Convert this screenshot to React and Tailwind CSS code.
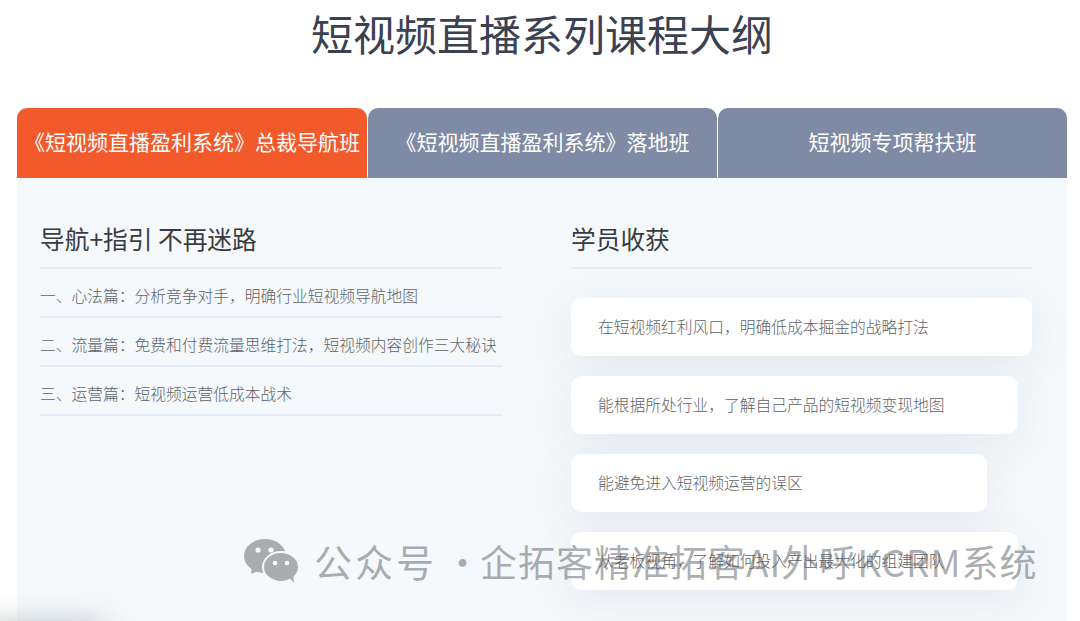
const tabs = [
  { label: "《短视频直播盈利系统》总裁导航班", active: true, width: "w-[350px]" },
  { label: "《短视频直播盈利系统》落地班", width: "w-[349px]" },
  { label: "短视频专项帮扶班", width: "w-[349px]" },
];

const outline = [
  "一、心法篇：分析竞争对手，明确行业短视频导航地图",
  "二、流量篇：免费和付费流量思维打法，短视频内容创作三大秘诀",
  "三、运营篇：短视频运营低成本战术",
];

const gains = [
  { text: "在短视频红利风口，明确低成本掘金的战略打法", width: "w-[461px]" },
  { text: "能根据所处行业，了解自己产品的短视频变现地图", width: "w-[447px]" },
  { text: "能避免进入短视频运营的误区", width: "w-[416px]" },
  { text: "从老板视角，了解如何投入产出最大化的组建团队", width: "w-[447px]" },
];

const WechatIcon = () => (
  <svg width="54" height="44" viewBox="0 0 54 44" fill="#a9adb0">
    <ellipse cx="21" cy="17" rx="21" ry="17" />
    <path d="M8 27 L7 35 L17 31 Z" />
    <ellipse cx="37" cy="28" rx="18" ry="15" stroke="#f5f9fc" strokeWidth="2" />
    <path d="M45 38 L50 44 L49 34 Z" />
    <circle cx="14" cy="11" r="2.6" fill="#f5f9fc" />
    <circle cx="27" cy="11" r="2.6" fill="#f5f9fc" />
    <circle cx="31" cy="24" r="2.3" fill="#f5f9fc" />
    <circle cx="43" cy="24" r="2.3" fill="#f5f9fc" />
  </svg>
);

export default function App() {
  return (
    <div className="relative h-[621px] w-[1080px] overflow-hidden bg-white font-['Noto_Sans_CJK_SC',sans-serif]">
      <h1 className="h-[108px] pt-[2px] pl-[4px] text-center text-[42px] leading-[62px] font-normal text-[#3a4150]">
        短视频直播系列课程大纲
      </h1>

      <div className="ml-[17px] w-[1050px]">
        <div className="flex gap-px">
          {tabs.map((tab) => (
            <div
              key={tab.label}
              className={`flex h-[70px] items-center justify-center rounded-t-[10px] pb-[2px] text-[21px] text-white ${tab.width} ${
                tab.active ? "bg-[#f2592b]" : "bg-[#7f8ba5]"
              }`}
            >
              {tab.label}
            </div>
          ))}
        </div>

        <div className="flex h-[443px] gap-[69px] bg-[#f5f9fc] pl-[23px]">
          <div className="w-[462px]">
            <h2 className="flex h-[91px] items-center border-b-2 border-[#e6eef6] pt-[33px] text-[24.7px] font-normal text-[#383c42]">
              导航+指引 不再迷路
            </h2>
            <ul>
              {outline.map((line) => (
                <li
                  key={line}
                  className="flex h-[49px] items-center border-b-2 border-[#e6edf9] pt-[7px] text-[15.75px] font-light whitespace-nowrap text-[#5f6368]"
                >
                  {line}
                </li>
              ))}
            </ul>
          </div>

          <div className="w-[461px]">
            <h2 className="flex h-[91px] items-center border-b-2 border-[#e6eef6] pt-[33px] text-[24.7px] font-normal text-[#383c42]">
              学员收获
            </h2>
            <div className="mt-[29px] flex flex-col gap-5">
              {gains.map((item) => (
                <div
                  key={item.text}
                  className={`flex h-[58px] items-center rounded-[10px] bg-white pl-[27px] text-[15.75px] font-light text-[#5f6368] shadow-[0_10px_40px_rgba(90,100,120,0.1)] ${item.width}`}
                >
                  {item.text}
                </div>
              ))}
            </div>
          </div>
        </div>
      </div>

      {/* 水印 */}
      <div className="absolute top-[535px] left-[244px] flex items-center whitespace-nowrap leading-[52px] text-[rgba(90,96,100,0.5)]">
        <WechatIcon />
        <span className="ml-[16px] text-[38px] tracking-[3px]">公众号</span>
        <span className="ml-[7px] text-[37px]">·</span>
        <span className="ml-[-1px] text-[37px] tracking-[1px]">企拓客精准拓客AI外呼KCRM系统</span>
      </div>

      {/* 左下角阴影 */}
      <div className="absolute top-[630px] left-[-20px] h-5 w-[120px] rounded-full shadow-[0_0_28px_10px_rgba(90,100,110,0.3)]" />
    </div>
  );
}
